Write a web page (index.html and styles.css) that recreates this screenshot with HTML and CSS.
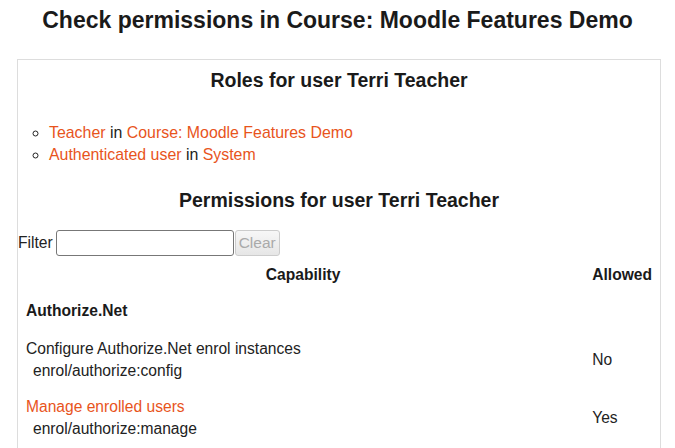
FILE: index.html
```html
<!DOCTYPE html>
<html>
<head>
<meta charset="utf-8">
<link rel="stylesheet" href="styles.css">
</head>
<body>
<h2 class="main-title">Check permissions in Course: Moodle Features Demo</h2>
<div class="box">
  <h3 class="section-title roles-title">Roles for user Terri Teacher</h3>
  <ul class="role-list">
    <li><a href="#">Teacher</a> in <a href="#">Course: Moodle Features Demo</a></li>
    <li><a href="#">Authenticated user</a> in <a href="#">System</a></li>
  </ul>
  <h3 class="section-title perms-title">Permissions for user Terri Teacher</h3>
  <div class="filter">
    <label class="filter-label">Filter</label>
    <input class="filter-input" type="text">
    <button class="filter-clear" disabled>Clear</button>
  </div>
  <table class="caps">
    <thead>
      <tr><th class="col-cap">Capability</th><th class="col-allowed">Allowed</th></tr>
    </thead>
    <tbody>
      <tr class="group"><td colspan="2">Authorize.Net</td></tr>
      <tr class="cap">
        <td class="cap-name">Configure Authorize.Net enrol instances<div class="cap-id">enrol/authorize:config</div></td>
        <td class="cap-allowed">No</td>
      </tr>
      <tr class="cap">
        <td class="cap-name"><a href="#">Manage enrolled users</a><div class="cap-id">enrol/authorize:manage</div></td>
        <td class="cap-allowed">Yes</td>
      </tr>
    </tbody>
  </table>
</div>
</body>
</html>
```
FILE: styles.css
```css
html, body {
  margin: 0;
  padding: 0;
  background: #fff;
}
body {
  font-family: "Liberation Sans", Arial, sans-serif;
  font-size: 15.6px;
  color: #222;
  padding: 0 8px;
}
a {
  color: #e8541c;
  text-decoration: none;
}
.main-title {
  margin: 0;
  padding-top: 6px;
  height: 59px;
  box-sizing: border-box;
  font-size: 23px;
  line-height: 28px;
  font-weight: bold;
  text-align: center;
  color: #1a1a1a;
}
.box {
  margin-left: 9px;
  width: 644px;
  box-sizing: border-box;
  border: 1px solid #ddd;
  border-bottom: none;
  height: 389px;
}
.section-title {
  margin: 0;
  font-size: 19.5px;
  line-height: 24px;
  font-weight: bold;
  text-align: center;
  color: #1a1a1a;
}
.roles-title {
  padding-top: 8px;
}
.role-list {
  margin: 30px 0 0 0;
  padding-left: 31px;
  list-style: circle;
  line-height: 22px;
  font-size: 15.9px;
}
.perms-title {
  margin-top: 22px;
}
.filter {
  display: flex;
  align-items: center;
  margin-top: 18px;
  height: 26px;
}
.filter-label {
  margin-right: 3px;
}
.filter-input {
  width: 178px;
  height: 26px;
  box-sizing: border-box;
  border: 1px solid #777;
  border-radius: 3px;
  margin: 0;
}
.filter-clear {
  margin: 0 0 0 1px;
  height: 26px;
  width: 45px;
  box-sizing: border-box;
  border: 1px solid #ccc;
  border-radius: 3px;
  background: linear-gradient(#f7f7f7, #e6e6e6);
  color: #aaa;
  font-family: "Liberation Sans", Arial, sans-serif;
  font-size: 15.5px;
  padding: 0;
}
.caps {
  width: 638px;
  border-collapse: collapse;
  margin-top: 3px;
}
.caps th {
  font-weight: bold;
  line-height: 18px;
  padding: 7px 4px 3px 4px;
  color: #1a1a1a;
}
.col-cap {
  text-align: center;
}
.col-allowed {
  text-align: left;
  width: 58px;
}
.group td {
  font-weight: bold;
  line-height: 18px;
  padding: 15px 4px 9px 8px;
  color: #1a1a1a;
}
.cap td {
  padding: 9px 4px 5px 8px;
  line-height: 22px;
  vertical-align: middle;
}
.cap-id {
  padding-left: 7px;
}
.cap td.cap-allowed {
  padding-left: 4px;
}
```
